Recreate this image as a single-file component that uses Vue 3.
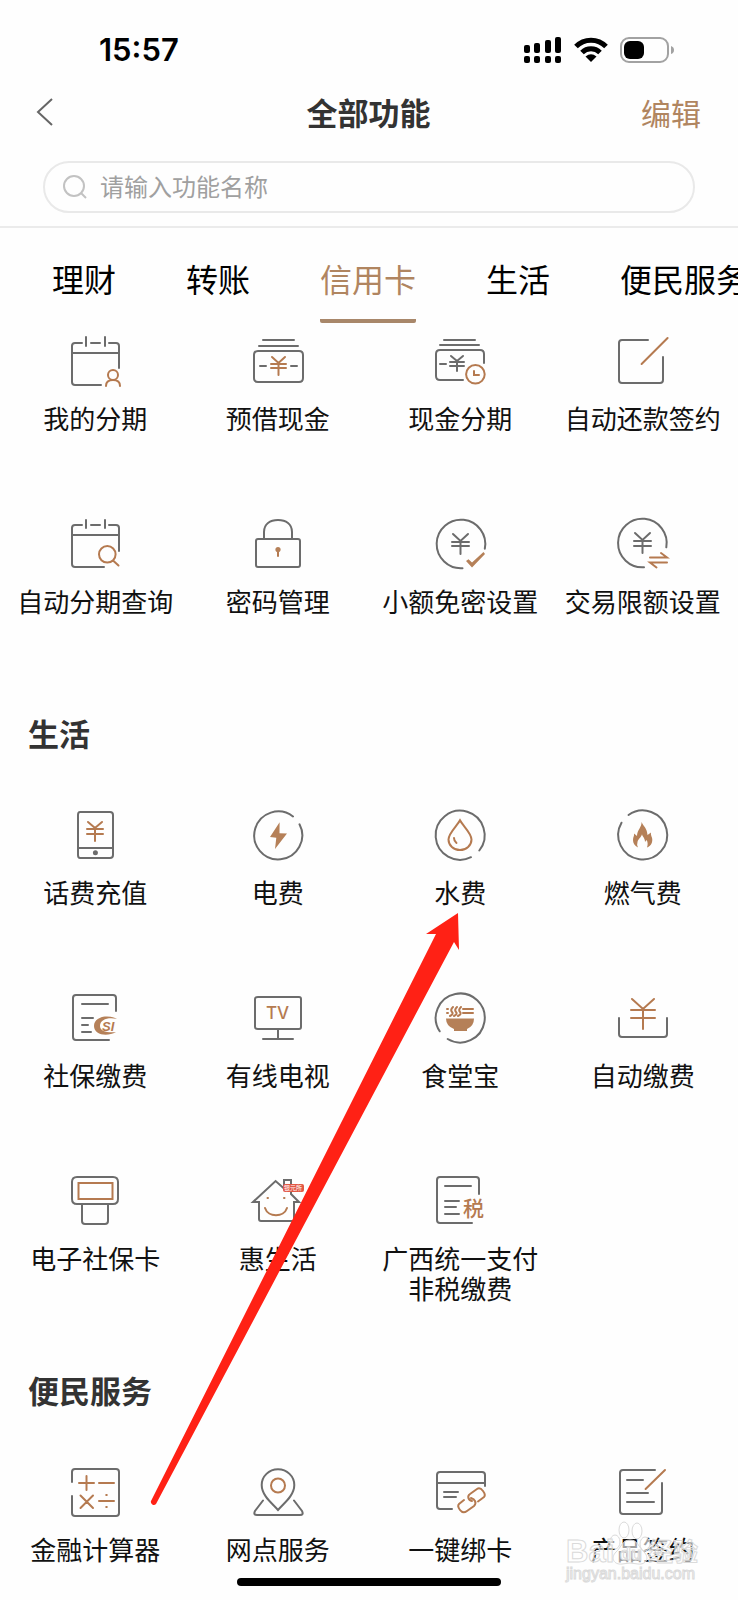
<script setup>
import { ref } from 'vue'

const keyword = ref('')
const tabs = ['理财', '转账', '信用卡', '生活', '便民服务']
const activeTab = ref('信用卡')

const yen = (left, right, top, bottom, bar1, bar2) => {
  const c = (left + right) / 2
  return `M${left + 1} ${top}L${c} ${bar1 - 1}L${right - 1} ${top}M${left} ${bar1}H${right}M${left} ${bar2}H${right}M${c} ${bar1 - 1}V${bottom}`
}

const icons = {
  calendarUser: {
    gray: 'M17 12H10Q7 12 7 15V51Q7 54 10 54H36M26 12H35M44 12H51Q54 12 54 15V37M7 22H54M21 6V15M40 6V15',
    brown: 'M48 39a5 5 0 1 1 0 10a5 5 0 1 1 0-10M41 55C41 51 44 49 48 49S55 51 55 55'
  },
  cash: {
    gray: 'M15 9H46M11 15H50M10 20H51Q55 20 55 24V47Q55 51 51 51H10Q6 51 6 47V24Q6 20 10 20M12 35H18M43 35H49',
    brown: yen(23, 38, 26, 44, 33, 37)
  },
  cashClock: {
    gray: 'M14 9H45M10 14H49M54 32V23Q54 19 50 19H10Q6 19 6 23V45Q6 49 10 49H33M10 33H16' + yen(20, 34, 25, 40, 31, 35),
    brown: 'M45.4 34a9.3 9.3 0 1 1 0 18.600a9.3 9.3 0 1 1 0-18.600M44 40V44H49'
  },
  sign: {
    gray: 'M35 9H9Q6 9 6 12V49Q6 52 9 52H47Q50 52 50 49V26',
    brown: 'M28.600 33L54.600 7'
  },
  calendarSearch: {
    gray: 'M17 11H10Q7 11 7 14V50Q7 53 10 53H39M26 11H35M44 11H51Q54 11 54 14V37M7 21H54M21 6V14M40 6V14',
    brown: 'M42.300 32a8.300 8.300 0 1 1 0 16.600a8.300 8.300 0 1 1 0-16.600M48 46.500L53.500 51.500'
  },
  lock: {
    gray: 'M10 25H50Q52 25 52 27V51Q52 53 50 53H10Q8 53 8 51V27Q8 25 10 25M16 25V18C16 10 22 6 30 6S44 10 44 18V25',
    brown: 'M30 36V42',
    fill: 'M30 33a2.600 2.600 0 1 1 0 5.200a2.600 2.600 0 1 1 0-5.200'
  },
  coinCheck: {
    gray: 'M54.800 34.700A24.300 24.300 0 1 0 32.500 54.200' + yen(22, 39, 20, 40, 28, 32),
    fill: 'M36 47L38.500 45.200L42 48.500L53.500 38L55 40L42 53.500Z'
  },
  coinSwap: {
    gray: 'M53.300 33.300A24.300 24.300 0 1 0 31 53.300' + yen(21, 38, 19, 39, 27, 32),
    brown: 'M37 43.500H54L48 39M54 48.500H37L43.500 53.500'
  },
  phone: {
    gray: 'M15 7H45Q48 7 48 10V50Q48 53 45 53H15Q13 53 13 50V10Q13 7 15 7M13 43H48',
    brown: yen(22, 38, 17, 36, 24, 29),
    dot: 'M30.400 45.200a2.500 2.500 0 1 1 0 5a2.500 2.500 0 1 1 0-5'
  },
  power: {
    gray: 'M45 11.500A24 24 0 1 0 51.500 19.300',
    fill: 'M31.600 17.300L22 32L28.300 32.800L27 44L39 28.500L31.500 28.300Z'
  },
  water: {
    gray: 'M49.300 45.500A24.500 24.500 0 1 0 41 52.200',
    brown: 'M30 15.300C27 21 18.500 28 18.500 34.500A11.500 10.500 0 0 0 41.500 34.500C41.500 28 33 21 30 15.300ZM24 33Q24 36 26.500 38'
  },
  gas: {
    gray: 'M8.500 17.700A24.500 24.500 0 1 0 15.500 10',
    fill: 'M28.500 17C31 22 34 23 34.500 30L38 27.500C37.500 31 39.500 32 39.300 35C39 39 37.500 41 34 42.500Q35.500 38 33.500 35L32 37C32 33 29.500 32 29 29.300C28 33 25 34 24.500 37Q23.500 40 25 42.500C21.500 41 20 38 20 35C20 32 21.500 31 21 28.500L24 31C24 25 29 22 28.500 17Z'
  },
  social: {
    gray: 'M51 23V10Q51 7 48 7H11Q8 7 8 10V49Q8 52 11 52H44M17 16H43M17 30H28M17 37H23M17 44H26',
    fill: 'M52 31C42 26 29 29 29 38C29 47 42 49 51 44C44 45 35 44 35 38C35 31 44 29 52 31Z',
    text: { value: 'SI', x: 37, y: 43, cls: 'icon-si' }
  },
  tv: {
    gray: 'M10 9H51Q53 9 53 11V39Q53 41 51 41H10Q7 41 7 39V11Q7 9 10 9M30 41V51M15 51H45',
    text: { value: 'TV', x: 18, y: 31, cls: 'icon-tv' }
  },
  canteen: {
    gray: 'M9.700 43.300A24.500 24.500 0 1 1 17.700 51',
    brown: 'M17 21H18M17 25H18M23 19Q20 22 22 24T20 28M27 19Q24 22 26 24T24 28M31 19Q28 22 30 24T28 28M33 21H43M33 25H43',
    fill: 'M16 30.500H44Q44 38 37 41V43H24V41Q16 38 16 30.500Z'
  },
  autoPay: {
    gray: 'M6 30V46Q6 49 9 49H51Q54 49 54 46V30',
    brown: yen(18, 42, 11, 41, 22, 30)
  },
  reader: {
    gray: 'M12 6H48Q53 6 53 11V28Q53 33 48 33H12Q7 33 7 28V11Q7 6 12 6M17 33V50Q17 53 20 53H40Q43 53 43 50V33',
    brown: 'M13.500 12H47.500V28H13.500Z'
  },
  house: {
    gray: 'M36 16V9H43V23L51 31H46V50H13Q11 50 11 48V31H5L27.600 10L36 17.500',
    brown: 'M17 37C20 46.500 36 46.500 39 37M19.500 27H20M36 27H36.500',
    badge: { x: 35, y: 13, width: 21, height: 8 },
    text: { value: '银元所', x: 36, y: 19, cls: 'icon-badge' }
  },
  tax: {
    gray: 'M49 23V9Q49 6 46 6H10Q7 6 7 9V49Q7 52 10 52H42M15 15H41M15 30H29M15 36H26M15 43H29',
    text: { value: '税', x: 33, y: 45, cls: 'icon-tax' }
  },
  calculator: {
    gray: 'M7 20V10Q7 7 10 7H51Q54 7 54 10V51Q54 54 51 54H10Q7 54 7 51V34',
    brown: 'M14 21H29M21.500 14V28M34 21H49M15.500 33.500L28 46M28 33.500L15.500 46M34 39H49M41.200 33H41.800M41.200 45H41.800'
  },
  branch: {
    gray: 'M30 48C25 42 13.700 34 13.700 23A16.300 15.700 0 0 1 46.300 23C46.300 34 35 42 30 48ZM15 38.500L7 49Q5 53 9 53H52Q56 53 54 49L46 38.500',
    brown: 'M30 16.500a7 7 0 1 1 0 14a7 7 0 1 1 0-14'
  },
  bindCard: {
    gray: 'M55 24V13Q55 10 52 10H10Q7 10 7 13V44Q7 47 10 47H22M7 21H55M14 30H28M14 35H26',
    brown: 'M42 39C38 38 37 34 40 32L47 27Q50 25 53 29T54 35L48 39.500M41 36C45 37 47 41 44 44L37 49Q33 52 30 48T29 42L34 38'
  },
  product: {
    gray: 'M42 8H10Q7 8 7 11V49Q7 52 10 52H46Q49 52 49 49V21M14 18H30M14 31H35M14 40H41',
    brown: 'M32.600 27L52 8'
  }
}

const sections = [
  {
    id: 'credit',
    title: '',
    items: [
      { label: ['我的分期'], icon: 'calendarUser' },
      { label: ['预借现金'], icon: 'cash' },
      { label: ['现金分期'], icon: 'cashClock' },
      { label: ['自动还款签约'], icon: 'sign' },
      { label: ['自动分期查询'], icon: 'calendarSearch' },
      { label: ['密码管理'], icon: 'lock' },
      { label: ['小额免密设置'], icon: 'coinCheck' },
      { label: ['交易限额设置'], icon: 'coinSwap' }
    ]
  },
  {
    id: 'life',
    title: '生活',
    items: [
      { label: ['话费充值'], icon: 'phone' },
      { label: ['电费'], icon: 'power' },
      { label: ['水费'], icon: 'water' },
      { label: ['燃气费'], icon: 'gas' },
      { label: ['社保缴费'], icon: 'social' },
      { label: ['有线电视'], icon: 'tv' },
      { label: ['食堂宝'], icon: 'canteen' },
      { label: ['自动缴费'], icon: 'autoPay' },
      { label: ['电子社保卡'], icon: 'reader' },
      { label: ['惠生活'], icon: 'house' },
      { label: ['广西统一支付', '非税缴费'], icon: 'tax' }
    ]
  },
  {
    id: 'service',
    title: '便民服务',
    items: [
      { label: ['金融计算器'], icon: 'calculator' },
      { label: ['网点服务'], icon: 'branch' },
      { label: ['一键绑卡'], icon: 'bindCard' },
      { label: ['产品签约'], icon: 'product' }
    ]
  }
]
</script>

<template>
  <div class="page">
    <div class="status">
      <span class="time">15:57</span>
      <div class="status-icons">
        <svg class="signal" viewBox="0 0 38 26" aria-hidden="true">
          <rect x="0" y="8" width="6" height="8" rx="2" />
          <rect x="10" y="6" width="6" height="10" rx="2" />
          <rect x="21" y="3" width="6" height="13" rx="2" />
          <rect x="31" y="0" width="6" height="16" rx="2" />
          <rect x="0" y="19" width="6" height="7" rx="2" />
          <rect x="10" y="19" width="6" height="7" rx="2" />
          <rect x="21" y="19" width="6" height="7" rx="2" />
          <rect x="31" y="19" width="6" height="7" rx="2" />
        </svg>
        <svg class="wifi" viewBox="0 0 34 26" aria-hidden="true">
          <path class="wave" d="M2 9.500C10 1 24 1 32 9.500M8 15.500C13 10.500 21 10.500 26 15.500" />
          <path d="M17 25L11.500 19.500Q17 15 22.500 19.500Z" />
        </svg>
        <svg class="battery" viewBox="0 0 56 26" aria-hidden="true">
          <rect class="shell" x="1" y="1" width="47" height="24" rx="8" />
          <rect x="4" y="4" width="20" height="18" rx="6" />
          <path class="nub" d="M51 9Q54 10 54 13T51 17Z" />
        </svg>
      </div>
    </div>

    <header class="header">
      <button class="back" type="button" aria-label="返回">
        <svg viewBox="0 0 18 30" aria-hidden="true"><path d="M16 2L2 15L16 28" /></svg>
      </button>
      <h1>全部功能</h1>
      <button class="edit" type="button">编辑</button>
    </header>

    <div class="search-row">
      <label class="search">
        <svg viewBox="0 0 26 26" aria-hidden="true">
          <circle cx="12" cy="12" r="10" />
          <path d="M19 19L24 24" />
        </svg>
        <input v-model="keyword" type="text" placeholder="请输入功能名称" aria-label="请输入功能名称" />
      </label>
    </div>

    <nav class="tabs">
      <button
        v-for="tab in tabs"
        :key="tab"
        type="button"
        class="tab"
        :class="{ active: tab === activeTab }"
        @click="activeTab = tab"
      >{{ tab }}</button>
    </nav>

    <main>
      <section v-for="section in sections" :key="section.id" class="section">
        <h2 v-if="section.title">{{ section.title }}</h2>
        <div class="grid">
          <button v-for="item in section.items" :key="item.label[0]" type="button" class="item">
            <svg class="icon" viewBox="0 0 60 60" aria-hidden="true">
              <path class="gray" :d="icons[item.icon].gray" />
              <path v-if="icons[item.icon].brown" class="brown" :d="icons[item.icon].brown" />
              <path v-if="icons[item.icon].fill" class="fill" :d="icons[item.icon].fill" />
              <path v-if="icons[item.icon].dot" class="dot" :d="icons[item.icon].dot" />
              <rect v-if="icons[item.icon].badge" class="badge" v-bind="icons[item.icon].badge" rx="2" />
              <text
                v-if="icons[item.icon].text"
                :class="icons[item.icon].text.cls"
                :x="icons[item.icon].text.x"
                :y="icons[item.icon].text.y"
              >{{ icons[item.icon].text.value }}</text>
            </svg>
            <span v-for="line in item.label" :key="line" class="label">{{ line }}</span>
          </button>
        </div>
      </section>
    </main>

    <div class="home-bar"></div>

    <svg class="arrow" viewBox="0 0 310 594" aria-hidden="true">
      <path d="M308 0L276 21L286 21L1 588A3 3 0 0 0 6 591L304 29L309 37Z" />
    </svg>

    <svg class="watermark" viewBox="0 0 140 70" aria-hidden="true">
      <ellipse cx="60" cy="10" rx="5" ry="8" />
      <ellipse cx="73" cy="11" rx="5" ry="8" />
      <ellipse cx="51" cy="22" rx="5" ry="7" />
      <ellipse cx="81" cy="24" rx="5" ry="7" />
      <path d="M66 20C58 20 57 28 52 32C46 38 50 45 58 44Q66 42 74 44C82 45 86 38 80 32C75 28 74 20 66 20Z" />
      <text class="wm-brand" x="2" y="42">Bai</text>
      <text class="wm-du" x="56" y="40">du</text>
      <text class="wm-cn" x="84" y="41">经验</text>
      <text class="wm-url" x="2" y="59">jingyan.baidu.com</text>
    </svg>
  </div>
</template>

<style>
body {
  background: #fefefe;
}
</style>

<style scoped>
.page {
  position: relative;
  overflow: hidden;
  min-height: 100vh;
  background: #fefefe;
  color: #111;
  font-family: "Noto Sans CJK SC", "Liberation Sans", sans-serif;
}

button {
  margin: 0;
  padding: 0;
  border: 0;
  background: none;
  color: inherit;
  font: inherit;
  cursor: pointer;
}

.status {
  display: flex;
  align-items: center;
  justify-content: space-between;
  height: 74px;
  padding: 26px 62px 0 99px;
  box-sizing: border-box;
}

.time {
  color: #000;
  font: 600 31px/40px Inter, sans-serif;
}

.status-icons {
  display: flex;
  gap: 12px;
}

.status-icons svg {
  display: block;
  height: 26px;
}

.signal {
  width: 38px;
}

.wifi {
  width: 34px;
}

.battery {
  width: 56px;
}

.wave {
  fill: none;
  stroke: #000;
  stroke-width: 5;
}

.shell {
  fill: none;
  stroke: #a2a2a2;
  stroke-width: 2;
}

.nub {
  fill: #a2a2a2;
}

.header {
  display: grid;
  grid-template-columns: 1fr auto 1fr;
  align-items: center;
  height: 76px;
  padding: 0 37px 0 36px;
}

.back {
  justify-self: start;
  width: 18px;
  height: 30px;
}

.back svg {
  display: block;
  width: 18px;
  height: 30px;
  fill: none;
  stroke: #666;
  stroke-width: 2;
}

h1 {
  margin: 0;
  color: #333;
  font-size: 31px;
  font-weight: 700;
  line-height: 44px;
}

.edit {
  justify-self: end;
  color: #b08560;
  font-size: 30px;
  line-height: 44px;
}

.search-row {
  padding: 11px 43px 13px;
  border-bottom: 2px solid #ebebeb;
}

.search {
  display: flex;
  align-items: center;
  gap: 12px;
  height: 52px;
  padding: 0 17px;
  border: 2px solid #e9e9e9;
  border-radius: 26px;
  box-sizing: border-box;
}

.search svg {
  width: 26px;
  height: 26px;
  fill: none;
  stroke: #c2c2c2;
  stroke-width: 2;
}

.search input {
  flex: 1;
  min-width: 0;
  padding: 0 0 2px;
  border: 0;
  outline: 0;
  background: none;
  color: #333;
  font: 24px/36px "Noto Sans CJK SC", sans-serif;
}

.search input::placeholder {
  color: #a0a0a0;
  opacity: 1;
}

.tabs {
  display: flex;
  gap: 70px;
  height: 95px;
  padding-left: 52px;
  overflow: hidden;
}

.tab {
  flex: none;
  height: 95px;
  padding-top: 8px;
  border-bottom: 4px solid transparent;
  border-radius: 2px;
  box-sizing: border-box;
  color: #000;
  font-size: 32px;
  line-height: 80px;
}

.tab.active {
  border-bottom-color: #a8876a;
  color: #b08560;
}

main {
  padding-top: 8px;
}

.section + .section {
  padding-top: 14px;
}

h2 {
  margin: 0 0 50px;
  padding-left: 28px;
  color: #333;
  font-size: 31px;
  font-weight: 700;
  line-height: 44px;
}

.grid {
  display: grid;
  grid-template-columns: repeat(4, 1fr);
  grid-auto-rows: 183px;
  padding: 0 4px;
}

.section:last-child .grid {
  grid-auto-rows: auto;
}

.item {
  display: flex;
  flex-direction: column;
  align-items: center;
  justify-content: flex-start;
}

.icon {
  display: block;
  width: 60px;
  height: 60px;
  margin-bottom: 12px;
}

.icon path {
  stroke-width: 2;
  stroke-linecap: round;
}

.icon .gray {
  fill: none;
  stroke: #6c6c6c;
}

.icon .brown {
  fill: none;
  stroke: #b57a50;
}

.icon .fill {
  fill: #b58058;
}

.icon .dot {
  fill: #6c6c6c;
}

.icon .badge {
  fill: #e25744;
}

.icon text {
  fill: #b57a50;
}

.icon-si {
  font: italic 700 13px "Liberation Sans", sans-serif;
}

.icon-tv {
  font: 500 17px Inter, sans-serif;
}

.icon-tax {
  font: 500 21px "Noto Sans CJK SC", sans-serif;
}

.icon .icon-badge {
  fill: #fff;
  font: 6px "Noto Sans CJK SC", sans-serif;
}

.label {
  font-size: 26px;
  line-height: 30px;
  white-space: nowrap;
}

.home-bar {
  width: 264px;
  height: 8px;
  margin: 14px auto;
  border-radius: 4px;
  background: #000;
}

.arrow {
  position: absolute;
  top: 913px;
  left: 150px;
  width: 310px;
  height: 594px;
  fill: #ff2115;
  pointer-events: none;
}

.watermark {
  position: absolute;
  right: 34px;
  bottom: 10px;
  width: 140px;
  height: 70px;
  fill: #fff;
  fill-opacity: 0.6;
  stroke: #dadada;
  stroke-width: 1;
  pointer-events: none;
}

.wm-brand {
  font: 700 31px "Liberation Sans", sans-serif;
}

.wm-du {
  font: 700 18px "Liberation Sans", sans-serif;
}

.wm-cn {
  font: 700 25px "Noto Sans CJK SC", sans-serif;
}

.wm-url {
  font: 16px "Liberation Sans", sans-serif;
}
</style>
